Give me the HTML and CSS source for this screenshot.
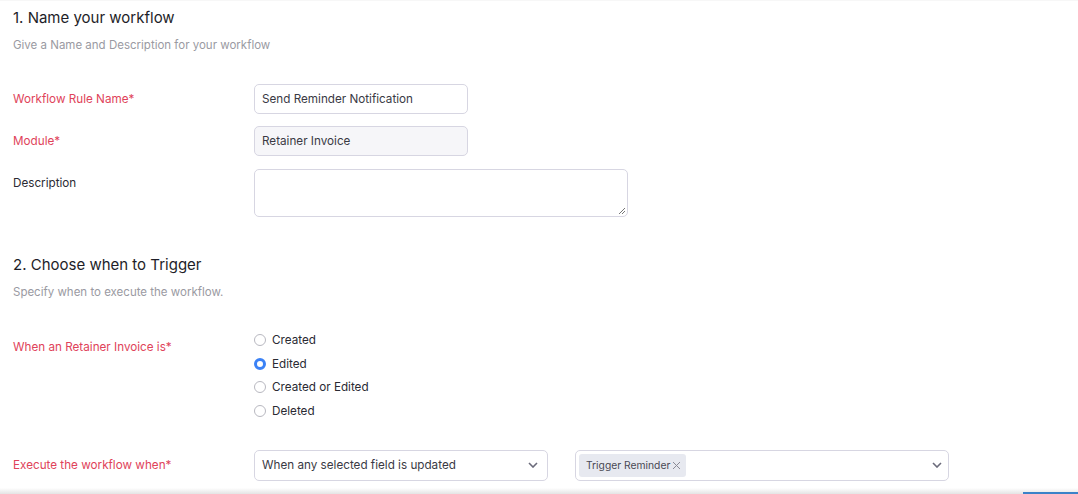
FILE: index.html
```html
<!DOCTYPE html>
<html>
<head>
<meta charset="utf-8">
<link rel="stylesheet" href="styles.css">
</head>
<body>
<div class="page">
  <section class="sec">
    <h2 class="title">1. Name your workflow</h2>
    <p class="sub">Give a Name and Description for your workflow</p>
    <div class="row r-name">
      <label class="lbl req">Workflow Rule Name*</label>
      <div class="input w213">Send Reminder Notification</div>
    </div>
    <div class="row r-mod">
      <label class="lbl req">Module*</label>
      <div class="input w213 disabled">Retainer Invoice</div>
    </div>
    <div class="row r-desc">
      <label class="lbl">Description</label>
      <div class="textarea">
        <svg class="grip" width="8" height="8" viewBox="0 0 8 8"><path d="M7 1L1 7M7 4L4 7" stroke="#777" stroke-width="1"/></svg>
      </div>
    </div>
  </section>
  <section class="sec sec2">
    <h2 class="title">2. Choose when to Trigger</h2>
    <p class="sub">Specify when to execute the workflow.</p>
    <div class="row r-when">
      <label class="lbl req">When an Retainer Invoice is*</label>
      <div class="radios">
        <div class="radio"><span class="dot"></span>Created</div>
        <div class="radio"><span class="dot on"></span>Edited</div>
        <div class="radio"><span class="dot"></span>Created or Edited</div>
        <div class="radio"><span class="dot"></span>Deleted</div>
      </div>
    </div>
    <div class="row r-exec">
      <label class="lbl req">Execute the workflow when*</label>
      <div class="selects">
        <div class="select s1">
          <span>When any selected field is updated</span>
          <svg class="chev" width="10" height="6" viewBox="0 0 10 6"><path d="M1 1l4 4 4-4" fill="none" stroke="#6b6b7b" stroke-width="1.6"/></svg>
        </div>
        <div class="select s2">
          <span class="tag">Trigger Reminder<svg class="x" width="9" height="9" viewBox="0 0 9 9"><path d="M1 1l7 7M8 1L1 8" stroke="#8a8a96" stroke-width="1"/></svg></span>
          <svg class="chev" width="10" height="6" viewBox="0 0 10 6"><path d="M1 1l4 4 4-4" fill="none" stroke="#6b6b7b" stroke-width="1.6"/></svg>
        </div>
      </div>
    </div>
  </section>
</div>
<div class="footer"><div class="footer-accent"></div></div>
</body>
</html>
```
FILE: styles.css
```css
* { box-sizing: border-box; }
html, body { margin: 0; padding: 0; background: #fff; }
body {
  font-family: Inter, "Noto Sans", sans-serif;
  color: #222;
  height: 494px;
  overflow: hidden;
  position: relative;
  border-top: 1px solid #f7f7f7;
}
.page { padding: 0 13px; }
.title {
  margin: 0;
  font-size: 15px;
  font-weight: 400;
  color: #1e1e28;
  line-height: 20px;
  padding-top: 7px;
}
.sub {
  margin: 0;
  margin-top: 9px;
  font-size: 11.5px;
  color: #9a9aa2;
  line-height: 16px;
}
.row { display: flex; }
.lbl {
  width: 241px;
  flex: none;
  font-size: 11.7px;
  line-height: 16px;
  color: #2a2a33;
}
.lbl.req { color: #e0435a; }
.r-name { margin-top: 31px; align-items: center; }
.r-name .lbl { margin-top: -1px; }
.r-mod { margin-top: 12px; align-items: center; }
.r-desc { margin-top: 13px; }
.r-desc .lbl { padding-top: 6px; }
.input {
  height: 30px;
  border: 1px solid #d7d6e2;
  border-radius: 5px;
  padding: 0 7px;
  display: flex;
  align-items: center;
  font-size: 11.7px;
  color: #3a3a44;
  background: #fff;
}
.w213 { width: 214px; }
.input.disabled { background: #f6f6f9; }
.textarea {
  width: 374px;
  height: 48px;
  border: 1px solid #d7d6e2;
  border-radius: 5px;
  position: relative;
}
.grip { position: absolute; right: 1px; bottom: 1px; }
.sec2 { margin-top: 38px; }
.sec2 .title { padding-top: 0; }
.r-when { margin-top: 39px; }
.r-when .lbl { padding-top: 0; }
.radios { display: flex; flex-direction: column; gap: 7.5px; margin-top: -7px; }
.radio {
  display: flex;
  align-items: center;
  font-size: 11.7px;
  line-height: 16px;
  color: #2a2a33;
}
.dot {
  width: 12px;
  height: 12px;
  border: 1px solid #b8b8c0;
  border-radius: 50%;
  margin-right: 6px;
  flex: none;
}
.dot.on { border: 3.5px solid #3b82f6; background: #fff; }
.r-exec { margin-top: 31px; align-items: center; }
.selects { display: flex; gap: 27px; }
.select {
  height: 31px;
  border: 1px solid #d7d6e2;
  border-radius: 5px;
  display: flex;
  align-items: center;
  justify-content: space-between;
  font-size: 11.7px;
  color: #3a3a44;
  background: #fff;
}
.s1 { width: 294px; padding: 0 9px 0 7px; }
.s2 { width: 374px; padding: 0 6px 0 3px; }
.tag {
  background: #e7e9f0;
  border-radius: 3px;
  height: 23px;
  display: inline-flex;
  align-items: center;
  padding: 0 5px 0 7px;
  font-size: 10.3px;
  color: #4a4a55;
  gap: 2px;
}
.footer {
  position: absolute;
  left: 0; right: 0; bottom: 0;
  height: 6px;
  background: linear-gradient(#fff, #ececec 70%, #e4e4e4);
}
.footer-accent {
  position: absolute;
  right: 0; bottom: 0;
  width: 55px; height: 2px;
  background: #3b82c8;
}
```
